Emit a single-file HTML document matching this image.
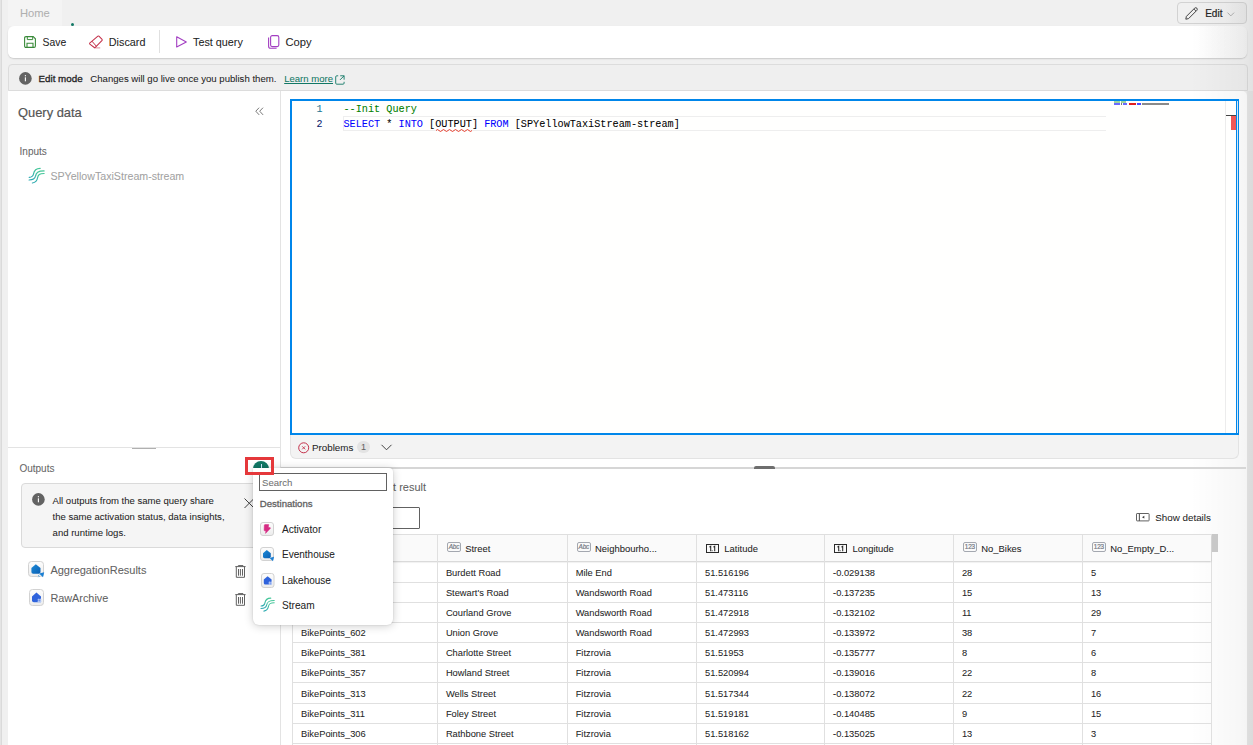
<!DOCTYPE html>
<html><head><meta charset="utf-8">
<style>
*{box-sizing:border-box;margin:0;padding:0}
html,body{width:1253px;height:745px;overflow:hidden;background:#f0f0f0;font-family:"Liberation Sans",sans-serif;color:#242424}
.a{position:absolute}
.t{position:absolute;white-space:nowrap;line-height:1;-webkit-text-stroke:0.05px currentColor}
svg{position:absolute;overflow:visible}
</style></head><body>
<div class="a" style="left:0px;top:0px;width:1px;height:745px;background:#e4e4e4"></div>
<div class="a" style="left:1px;top:0px;width:1px;height:745px;background:#dadada"></div>
<div class="a" style="left:8px;top:0px;width:54px;height:26px;background:#f4f4f4"></div>
<div class="t" style="left:20px;top:8.12px;font-size:11.2px;color:#b0b0b0;">Home</div>
<div class="a" style="left:70.8px;top:22.7px;width:3.5px;height:3.5px;border-radius:50%;background:#117865"></div>
<div class="a" style="left:1177px;top:2px;width:70px;height:22px;border:1px solid #d2d2d2;border-radius:4px;background:linear-gradient(90deg,#f0f0f0 70%,#e9e9e9)"></div>
<svg style="left:1185px;top:6.5px" width="14" height="13" viewBox="0 0 14 13"><path d="M0.8 12.2 L1.4 9.4 L9.6 1.2 Q10.8 0.2 11.9 1.2 Q12.8 2.3 11.8 3.4 L3.6 11.6 Z" fill="none" stroke="#424242" stroke-width="1"/><path d="M8.9 2 L11 4.1" stroke="#424242" stroke-width="0.9"/></svg>
<div class="t" style="left:1205.2px;top:8.54px;font-size:10px;color:#242424;-webkit-text-stroke:0.2px currentColor;">Edit</div>
<svg style="left:1227px;top:12px" width="8" height="5" viewBox="0 0 8 5"><path d="M0.5 0.6 L3.8 3.9 L7.1 0.6" fill="none" stroke="#a6a6a6" stroke-width="0.9"/></svg>
<div class="a" style="left:8px;top:26px;width:1239px;height:31.5px;background:linear-gradient(90deg,#fff 96%,#f3f3f3);border-radius:6px;box-shadow:0 1px 1.5px rgba(0,0,0,.16)"></div>
<svg style="left:24px;top:36px" width="12" height="12" viewBox="0 0 12 12"><path d="M2 0.6 H9.2 L11.4 2.8 V10 Q11.4 11.4 10 11.4 H2 Q0.6 11.4 0.6 10 V2 Q0.6 0.6 2 0.6 Z" fill="none" stroke="#3a8a3a" stroke-width="1.1"/><path d="M3.3 0.8 V3.6 H8.7 V0.8" fill="none" stroke="#3a8a3a" stroke-width="1"/><path d="M3 11.3 V7.2 H9 V11.3" fill="none" stroke="#3a8a3a" stroke-width="1.1"/></svg>
<div class="t" style="left:42.6px;top:37.50px;font-size:10.4px;color:#242424;">Save</div>
<svg style="left:88px;top:35px" width="16" height="14" viewBox="0 0 16 14"><path d="M1.7 8.1 L9.9 1.1 Q10.4 0.8 10.9 1.2 L14.1 4.4 Q14.4 4.9 14.1 5.4 L7.3 12.4 Q6.8 12.8 6.3 12.5 L1.8 9.1 Q1.4 8.6 1.7 8.1 Z" fill="none" stroke="#c4314b" stroke-width="1.05" stroke-linejoin="round"/><path d="M3.9 6.1 L8.3 11.2" stroke="#c4314b" stroke-width="1"/><path d="M6.4 12.9 H12.2" stroke="#c4314b" stroke-width="1" opacity=".55"/></svg>
<div class="t" style="left:108.8px;top:37.16px;font-size:10.8px;color:#242424;">Discard</div>
<div class="a" style="left:158.5px;top:30px;width:1px;height:23px;background:#e0e0e0"></div>
<svg style="left:176px;top:36px" width="12" height="12" viewBox="0 0 12 12"><path d="M0.7 0.8 L10.3 5.9 L0.7 11 Z" fill="none" stroke="#a33fc2" stroke-width="1.1" stroke-linejoin="round"/></svg>
<div class="t" style="left:193px;top:37.16px;font-size:10.8px;color:#242424;">Test query</div>
<svg style="left:267.5px;top:35px" width="12" height="14" viewBox="0 0 12 14"><rect x="2.6" y="0.6" width="8.2" height="11" rx="1.6" fill="none" stroke="#a33fc2" stroke-width="1.1"/><path d="M0.6 2.6 V11.2 Q0.6 13.3 2.7 13.3 H8.6" fill="none" stroke="#a33fc2" stroke-width="1.1"/></svg>
<div class="t" style="left:285.5px;top:36.82px;font-size:11.2px;color:#242424;">Copy</div>
<div class="a" style="left:8px;top:64px;width:1240px;height:27px;background:#efefef;border:1px solid #dcdcdc;border-radius:4px 4px 0 0"></div>
<svg style="left:19px;top:71.5px" width="13" height="13" viewBox="0 0 13 13"><circle cx="6.4" cy="6.4" r="6.3" fill="#636363"/><rect x="5.85" y="3.1" width="1.1" height="1.2" fill="#fff"/><rect x="5.85" y="5.3" width="1.1" height="4" fill="#fff"/></svg>
<div class="t" style="left:38.5px;top:73.50px;font-size:9.8px;color:#242424;-webkit-text-stroke:0.3px currentColor;">Edit mode</div>
<div class="t" style="left:90.3px;top:73.67px;font-size:9.6px;color:#242424;">Changes will go live once you publish them.</div>
<div class="t" style="left:284.2px;top:73.72px;font-size:9.55px;color:#117865;text-decoration:underline;text-underline-offset:0.8px">Learn more</div>
<svg style="left:335px;top:75px" width="10" height="10" viewBox="0 0 10 10"><path d="M3.2 0.8 H1.8 Q0.7 0.8 0.7 1.9 V8.2 Q0.7 9.2 1.8 9.2 H8 Q9.1 9.2 9.1 8.2 V6.8" fill="none" stroke="#117865" stroke-width="0.9"/><path d="M5.2 0.8 H9.1 V4.7 M9.1 0.8 L5 4.9" fill="none" stroke="#117865" stroke-width="0.9"/></svg>
<div class="a" style="left:8px;top:91px;width:272px;height:654px;background:#fff"></div>
<div class="a" style="left:280px;top:91px;width:1px;height:654px;background:#e3e3e3"></div>
<div class="t" style="left:18px;top:107.08px;font-size:12.9px;color:#555555;-webkit-text-stroke:0.2px currentColor;">Query data</div>
<svg style="left:254.5px;top:106.5px" width="10" height="9" viewBox="0 0 10 9"><path d="M4.1 0.7 L0.8 4.2 L4.2 7.9 M8 0.7 L4.7 4.2 L8.1 7.9" fill="none" stroke="#787878" stroke-width="1"/></svg>
<div class="t" style="left:19.6px;top:146.53px;font-size:10px;color:#666666;">Inputs</div>
<svg style="left:28px;top:167px" width="17" height="17" viewBox="0 0 17 17"><defs><linearGradient id="sg" x1="0" y1="0" x2="0.3" y2="1"><stop offset="0" stop-color="#4bd08f"/><stop offset="1" stop-color="#2aa7b4"/></linearGradient><linearGradient id="bx" x1="0" y1="0" x2="0" y2="1"><stop offset="0" stop-color="#fdfdfd"/><stop offset="1" stop-color="#ececec"/></linearGradient><linearGradient id="bl" x1="0" y1="0" x2="1" y2="1"><stop offset="0" stop-color="#1a8ad8"/><stop offset="1" stop-color="#0b5fb3"/></linearGradient></defs><g fill="none" stroke="url(#sg)" stroke-width="1.2" stroke-linecap="round"><path d="M1.2 10.3 C4.3 10.3 5 9.4 5.5 7 C6.1 3.3 7.8 1.3 12.2 1.3"/><path d="M1.1 13 C5 13 6.9 12 7.5 9.2 C8.1 5.6 9.8 3.9 16.1 3.9"/><path d="M4.4 16 C7.6 15.5 9 14 9.5 11 C10.1 7.6 11.4 6.5 16.1 6.5"/></g></svg>
<div class="t" style="left:50.4px;top:171.18px;font-size:10.65px;color:#a2a2a2;">SPYellowTaxiStream-stream</div>
<div class="a" style="left:8px;top:447px;width:272px;height:1px;background:#e3e3e3"></div>
<div class="a" style="left:132px;top:448px;width:24px;height:1.2px;background:#b0b0b0"></div>
<div class="t" style="left:19.4px;top:463.54px;font-size:10px;color:#666666;">Outputs</div>
<div class="a" style="left:20.5px;top:483px;width:250px;height:64.5px;background:#f5f5f5;border:1px solid #dadada;border-radius:4px"></div>
<svg style="left:31.5px;top:493px" width="13" height="13" viewBox="0 0 13 13"><circle cx="6.4" cy="6.4" r="6.3" fill="#636363"/><rect x="5.85" y="3.1" width="1.1" height="1.2" fill="#fff"/><rect x="5.85" y="5.3" width="1.1" height="4" fill="#fff"/></svg>
<div class="t" style="left:52.6px;top:496.02px;font-size:9.55px;color:#242424;">All outputs from the same query share</div>
<div class="t" style="left:52.6px;top:511.72px;font-size:9.55px;color:#242424;">the same activation status, data insights,</div>
<div class="t" style="left:52.6px;top:527.52px;font-size:9.55px;color:#242424;">and runtime logs.</div>
<svg style="left:244px;top:498px" width="11" height="11" viewBox="0 0 11 11"><path d="M0.5 0.5 L10 10 M10 0.5 L0.5 10" stroke="#424242" stroke-width="1"/></svg>
<svg style="left:27.8px;top:560.8px" width="17" height="17" viewBox="0 0 17 17"><rect x="0.5" y="0.5" width="15" height="15" rx="3" fill="url(#bx)" stroke="#d2d2d2"/><path d="M3.4 7 L7.8 3.2 L12.5 7 V11.5 L11 12.8 H5.2 Q3.4 12.8 3.4 11 Z" fill="url(#bl)"/><path d="M11.2 12.6 L16.2 11.2 L15 16.2 Z" fill="#1a7fd4"/><path d="M10.2 14.2 l1 1 M11.8 13.2 l1 1 M10.4 16.2 l1 -1" stroke="#3a9be0" stroke-width=".8"/></svg>
<div class="t" style="left:50.4px;top:564.69px;font-size:11px;color:#616161;">AggregationResults</div>
<svg style="left:29px;top:589px" width="16" height="17" viewBox="0 0 16 17"><rect x="0.5" y="0.5" width="14" height="16" rx="3" fill="url(#bx)" stroke="#d2d2d2"/><path d="M3 7.4 L7.4 3.6 L12 7.4 V13.2 H4.8 Q3 13.2 3 11.4 Z" fill="#2f63dc"/><path d="M8.5 10.8 H13 M8.5 12.4 H13 M9.8 9.6 V13.6 M11.6 9.6 V13.6" stroke="#cfdcfb" stroke-width=".7"/></svg>
<div class="t" style="left:50.4px;top:592.52px;font-size:10.85px;color:#616161;">RawArchive</div>
<svg style="left:235px;top:565px" width="11" height="13" viewBox="0 0 11 13"><path d="M0.3 1.6 H10.6 M3.3 1.3 V0.6 H8 V1.3 M1.3 1.8 V12.3 H9.5 V1.8 M3.5 4 V10.7 M5.4 4 V10.7 M7.5 4 V10.7" fill="none" stroke="#616161" stroke-width="1"/></svg>
<svg style="left:235px;top:593px" width="11" height="13" viewBox="0 0 11 13"><path d="M0.3 1.6 H10.6 M3.3 1.3 V0.6 H8 V1.3 M1.3 1.8 V12.3 H9.5 V1.8 M3.5 4 V10.7 M5.4 4 V10.7 M7.5 4 V10.7" fill="none" stroke="#616161" stroke-width="1"/></svg>
<div class="a" style="left:281px;top:91px;width:966px;height:654px;background:#fff;border-radius:0 5px 0 0"></div>
<div class="a" style="left:1247px;top:91px;width:6px;height:654px;background:#e8e8e8"></div>
<div class="a" style="left:1190px;top:0px;width:63px;height:745px;background:linear-gradient(90deg,rgba(0,0,0,0),rgba(0,0,0,.035) 85%,rgba(0,0,0,.06))"></div>
<div class="a" style="left:290px;top:99px;width:949px;height:360px;background:#f3f3f3;border:1px solid #e3e3e3;border-top:none;border-radius:0 0 6px 6px"></div>
<div class="a" style="left:290px;top:99px;width:949px;height:336px;background:#fffffe;border:2px solid #0086ea"></div>
<div class="a" style="left:343px;top:116px;width:763px;height:15px;border:1px solid #eeeeee;border-right:none"></div>
<div class="t" style="left:316.6px;top:104.53px;font-size:10px;color:#237893;font-family:'Liberation Mono',monospace;">1</div>
<div class="t" style="left:316.6px;top:119.53px;font-size:10px;color:#0b216f;font-family:'Liberation Mono',monospace;">2</div>
<div class="t" style="left:343.5px;top:105.37px;font-size:10.2px;color:#008000;font-family:'Liberation Mono',monospace;">--Init Query</div>
<div class="t" style="left:343.5px;top:120.37px;font-size:10.2px;color:#000;font-family:'Liberation Mono',monospace;"><span style="color:#0000ff">SELECT</span> * <span style="color:#0000ff">INTO</span> [OUTPUT] <span style="color:#0000ff">FROM</span> [SPYellowTaxiStream-stream]</div>
<svg style="left:436px;top:128px" width="40" height="4" viewBox="0 0 40 4"><path d="M0 2.5 q1.5 -2 3 0 t3 0 t3 0 t3 0 t3 0 t3 0 t3 0 t3 0 t3 0 t3 0 t3 0 t3 0" fill="none" stroke="#e51400" stroke-width="0.8"/></svg>
<div class="a" style="left:1114px;top:101px;width:6px;height:1.6px;background:#9fd69f"></div>
<div class="a" style="left:1121px;top:101px;width:5px;height:1.6px;background:#9fd69f"></div>
<div class="a" style="left:1114px;top:103px;width:6px;height:1.8px;background:#6a6aff"></div>
<div class="a" style="left:1121px;top:103px;width:1px;height:1.8px;background:#777"></div>
<div class="a" style="left:1123px;top:103px;width:4px;height:1.8px;background:#6a6aff"></div>
<div class="a" style="left:1129px;top:103px;width:7px;height:1.8px;background:#e21e1e"></div>
<div class="a" style="left:1137px;top:103px;width:4px;height:1.8px;background:#4a4aff"></div>
<div class="a" style="left:1142px;top:103px;width:27px;height:1.6px;background:#8a8a8a"></div>
<div class="a" style="left:1225px;top:101px;width:1px;height:332px;background:#ececec"></div>
<div class="a" style="left:1226px;top:115px;width:10px;height:1px;background:#444"></div>
<div class="a" style="left:1231px;top:116px;width:5px;height:14px;background:#f25757"></div>
<div class="a" style="left:1236px;top:101px;width:1px;height:332px;background:#0086ea"></div>
<div class="a" style="left:1237px;top:101px;width:1px;height:332px;background:#d8e8f5"></div>
<svg style="left:297.5px;top:441.5px" width="12" height="12" viewBox="0 0 12 12"><circle cx="5.7" cy="5.8" r="5" fill="none" stroke="#c4314b" stroke-width="1"/><path d="M4.2 4.3 L7.2 7.3 M7.2 4.3 L4.2 7.3" stroke="#c4314b" stroke-width="0.9"/></svg>
<div class="t" style="left:312px;top:442.70px;font-size:9.8px;color:#242424;">Problems</div>
<div class="a" style="left:357px;top:441px;width:13px;height:12px;border-radius:6px;background:#e3e3e3"></div>
<div class="t" style="left:361px;top:442.88px;font-size:9px;color:#616161;">1</div>
<svg style="left:380.5px;top:444px" width="11" height="7" viewBox="0 0 11 7"><path d="M0.5 0.8 L5.5 5.8 L10.5 0.8" fill="none" stroke="#424242" stroke-width="1"/></svg>
<div class="a" style="left:281px;top:467px;width:965px;height:2px;background:#d6d6d6"></div>
<div class="a" style="left:754px;top:466px;width:21px;height:3px;border-radius:2px 2px 0 0;background:#6e6e6e"></div>
<div class="t" style="right:827px;top:481.52px;font-size:10.96px;color:#616161">Test result</div>
<div class="a" style="left:300px;top:507px;width:120px;height:22px;border:1px solid #616161;border-radius:1px"></div>
<svg style="left:1136px;top:512.8px" width="14" height="9" viewBox="0 0 14 9"><rect x="0.5" y="0.5" width="12.6" height="7.4" rx=".6" fill="none" stroke="#5a5a5a" stroke-width=".95"/><path d="M3.4 0.5 V7.9" stroke="#5a5a5a" stroke-width="1.1"/><path d="M6 4.2 L8.3 2.8 V5.6 Z" fill="#3a3a3a"/></svg>
<div class="t" style="left:1155.3px;top:512.60px;font-size:9.8px;color:#242424;">Show details</div>
<div class="a" style="left:292px;top:534px;width:920px;height:211px;border:1px solid #e0e0e0;border-bottom:none"></div>
<div class="a" style="left:293px;top:535px;width:918px;height:26px;background:#fafafa;box-shadow:0 1px 1.5px rgba(0,0,0,.2)"></div>
<div class="a" style="left:437px;top:535px;width:1px;height:210px;background:#e0e0e0"></div>
<div class="a" style="left:567px;top:535px;width:1px;height:210px;background:#e0e0e0"></div>
<div class="a" style="left:696px;top:535px;width:1px;height:210px;background:#e0e0e0"></div>
<div class="a" style="left:824px;top:535px;width:1px;height:210px;background:#e0e0e0"></div>
<div class="a" style="left:953px;top:535px;width:1px;height:210px;background:#e0e0e0"></div>
<div class="a" style="left:1082px;top:535px;width:1px;height:210px;background:#e0e0e0"></div>
<div class="a" style="left:293px;top:582px;width:918px;height:1px;background:#e0e0e0"></div>
<div class="a" style="left:293px;top:602px;width:918px;height:1px;background:#e0e0e0"></div>
<div class="a" style="left:293px;top:622px;width:918px;height:1px;background:#e0e0e0"></div>
<div class="a" style="left:293px;top:642px;width:918px;height:1px;background:#e0e0e0"></div>
<div class="a" style="left:293px;top:662px;width:918px;height:1px;background:#e0e0e0"></div>
<div class="a" style="left:293px;top:682px;width:918px;height:1px;background:#e0e0e0"></div>
<div class="a" style="left:293px;top:703px;width:918px;height:1px;background:#e0e0e0"></div>
<div class="a" style="left:293px;top:723px;width:918px;height:1px;background:#e0e0e0"></div>
<div class="a" style="left:293px;top:743px;width:918px;height:1px;background:#e0e0e0"></div>
<div class="t" style="left:301.1px;top:568.83px;font-size:9.3px;color:#242424;">BikePoints_001</div>
<div class="t" style="left:445.9px;top:568.83px;font-size:9.3px;color:#242424;">Burdett Road</div>
<div class="t" style="left:575.7px;top:568.83px;font-size:9.3px;color:#242424;">Mile End</div>
<div class="t" style="left:705.0px;top:568.83px;font-size:9.3px;color:#242424;">51.516196</div>
<div class="t" style="left:833.1px;top:568.83px;font-size:9.3px;color:#242424;">-0.029138</div>
<div class="t" style="left:961.9px;top:568.83px;font-size:9.3px;color:#242424;">28</div>
<div class="t" style="left:1090.9px;top:568.83px;font-size:9.3px;color:#242424;">5</div>
<div class="t" style="left:301.1px;top:588.83px;font-size:9.3px;color:#242424;">BikePoints_002</div>
<div class="t" style="left:445.9px;top:588.83px;font-size:9.3px;color:#242424;">Stewart's Road</div>
<div class="t" style="left:575.7px;top:588.83px;font-size:9.3px;color:#242424;">Wandsworth Road</div>
<div class="t" style="left:705.0px;top:588.83px;font-size:9.3px;color:#242424;">51.473116</div>
<div class="t" style="left:833.1px;top:588.83px;font-size:9.3px;color:#242424;">-0.137235</div>
<div class="t" style="left:961.9px;top:588.83px;font-size:9.3px;color:#242424;">15</div>
<div class="t" style="left:1090.9px;top:588.83px;font-size:9.3px;color:#242424;">13</div>
<div class="t" style="left:301.1px;top:608.83px;font-size:9.3px;color:#242424;">BikePoints_003</div>
<div class="t" style="left:445.9px;top:608.83px;font-size:9.3px;color:#242424;">Courland Grove</div>
<div class="t" style="left:575.7px;top:608.83px;font-size:9.3px;color:#242424;">Wandsworth Road</div>
<div class="t" style="left:705.0px;top:608.83px;font-size:9.3px;color:#242424;">51.472918</div>
<div class="t" style="left:833.1px;top:608.83px;font-size:9.3px;color:#242424;">-0.132102</div>
<div class="t" style="left:961.9px;top:608.83px;font-size:9.3px;color:#242424;">11</div>
<div class="t" style="left:1090.9px;top:608.83px;font-size:9.3px;color:#242424;">29</div>
<div class="t" style="left:301.1px;top:628.83px;font-size:9.3px;color:#242424;">BikePoints_602</div>
<div class="t" style="left:445.9px;top:628.83px;font-size:9.3px;color:#242424;">Union Grove</div>
<div class="t" style="left:575.7px;top:628.83px;font-size:9.3px;color:#242424;">Wandsworth Road</div>
<div class="t" style="left:705.0px;top:628.83px;font-size:9.3px;color:#242424;">51.472993</div>
<div class="t" style="left:833.1px;top:628.83px;font-size:9.3px;color:#242424;">-0.133972</div>
<div class="t" style="left:961.9px;top:628.83px;font-size:9.3px;color:#242424;">38</div>
<div class="t" style="left:1090.9px;top:628.83px;font-size:9.3px;color:#242424;">7</div>
<div class="t" style="left:301.1px;top:648.83px;font-size:9.3px;color:#242424;">BikePoints_381</div>
<div class="t" style="left:445.9px;top:648.83px;font-size:9.3px;color:#242424;">Charlotte Street</div>
<div class="t" style="left:575.7px;top:648.83px;font-size:9.3px;color:#242424;">Fitzrovia</div>
<div class="t" style="left:705.0px;top:648.83px;font-size:9.3px;color:#242424;">51.51953</div>
<div class="t" style="left:833.1px;top:648.83px;font-size:9.3px;color:#242424;">-0.135777</div>
<div class="t" style="left:961.9px;top:648.83px;font-size:9.3px;color:#242424;">8</div>
<div class="t" style="left:1090.9px;top:648.83px;font-size:9.3px;color:#242424;">6</div>
<div class="t" style="left:301.1px;top:668.83px;font-size:9.3px;color:#242424;">BikePoints_357</div>
<div class="t" style="left:445.9px;top:668.83px;font-size:9.3px;color:#242424;">Howland Street</div>
<div class="t" style="left:575.7px;top:668.83px;font-size:9.3px;color:#242424;">Fitzrovia</div>
<div class="t" style="left:705.0px;top:668.83px;font-size:9.3px;color:#242424;">51.520994</div>
<div class="t" style="left:833.1px;top:668.83px;font-size:9.3px;color:#242424;">-0.139016</div>
<div class="t" style="left:961.9px;top:668.83px;font-size:9.3px;color:#242424;">22</div>
<div class="t" style="left:1090.9px;top:668.83px;font-size:9.3px;color:#242424;">8</div>
<div class="t" style="left:301.1px;top:689.83px;font-size:9.3px;color:#242424;">BikePoints_313</div>
<div class="t" style="left:445.9px;top:689.83px;font-size:9.3px;color:#242424;">Wells Street</div>
<div class="t" style="left:575.7px;top:689.83px;font-size:9.3px;color:#242424;">Fitzrovia</div>
<div class="t" style="left:705.0px;top:689.83px;font-size:9.3px;color:#242424;">51.517344</div>
<div class="t" style="left:833.1px;top:689.83px;font-size:9.3px;color:#242424;">-0.138072</div>
<div class="t" style="left:961.9px;top:689.83px;font-size:9.3px;color:#242424;">22</div>
<div class="t" style="left:1090.9px;top:689.83px;font-size:9.3px;color:#242424;">16</div>
<div class="t" style="left:301.1px;top:709.83px;font-size:9.3px;color:#242424;">BikePoints_311</div>
<div class="t" style="left:445.9px;top:709.83px;font-size:9.3px;color:#242424;">Foley Street</div>
<div class="t" style="left:575.7px;top:709.83px;font-size:9.3px;color:#242424;">Fitzrovia</div>
<div class="t" style="left:705.0px;top:709.83px;font-size:9.3px;color:#242424;">51.519181</div>
<div class="t" style="left:833.1px;top:709.83px;font-size:9.3px;color:#242424;">-0.140485</div>
<div class="t" style="left:961.9px;top:709.83px;font-size:9.3px;color:#242424;">9</div>
<div class="t" style="left:1090.9px;top:709.83px;font-size:9.3px;color:#242424;">15</div>
<div class="t" style="left:301.1px;top:729.83px;font-size:9.3px;color:#242424;">BikePoints_306</div>
<div class="t" style="left:445.9px;top:729.83px;font-size:9.3px;color:#242424;">Rathbone Street</div>
<div class="t" style="left:575.7px;top:729.83px;font-size:9.3px;color:#242424;">Fitzrovia</div>
<div class="t" style="left:705.0px;top:729.83px;font-size:9.3px;color:#242424;">51.518162</div>
<div class="t" style="left:833.1px;top:729.83px;font-size:9.3px;color:#242424;">-0.135025</div>
<div class="t" style="left:961.9px;top:729.83px;font-size:9.3px;color:#242424;">13</div>
<div class="t" style="left:1090.9px;top:729.83px;font-size:9.3px;color:#242424;">3</div>
<div class="t" style="left:465.2px;top:544.00px;font-size:9.45px;color:#242424;">Street</div>
<div class="a" style="left:447.0px;top:542px;width:14px;height:10px;border:1.3px solid #a4a8b0;border-radius:2px"></div>
<div class="t" style="left:448.8px;top:544.4px;font-size:6.4px;color:#767b86;font-style:italic;-webkit-text-stroke:0.2px #767b86;letter-spacing:-0.2px">Abc</div>
<div class="t" style="left:595.0px;top:544.00px;font-size:9.45px;color:#242424;">Neighbourho...</div>
<div class="a" style="left:576.8px;top:542px;width:14px;height:10px;border:1.3px solid #a4a8b0;border-radius:2px"></div>
<div class="t" style="left:578.6px;top:544.4px;font-size:6.4px;color:#767b86;font-style:italic;-webkit-text-stroke:0.2px #767b86;letter-spacing:-0.2px">Abc</div>
<div class="t" style="left:724.3px;top:544.00px;font-size:9.45px;color:#242424;">Latitude</div>
<svg style="left:705.9px;top:544px" width="13" height="9" viewBox="0 0 13 9"><rect x="0.5" y="0.5" width="12" height="8" fill="none" stroke="#2a2a2a" stroke-width="1"/><path d="M3.4 3.1 L4.7 2.2 V7.2 M7.4 3.1 L8.7 2.2 V7.2" fill="none" stroke="#2a2a2a" stroke-width="1.05"/><rect x="5.7" y="6.3" width="0.9" height="0.9" fill="#2a2a2a"/></svg>
<div class="t" style="left:852.4px;top:544.00px;font-size:9.45px;color:#242424;">Longitude</div>
<svg style="left:834.0px;top:544px" width="13" height="9" viewBox="0 0 13 9"><rect x="0.5" y="0.5" width="12" height="8" fill="none" stroke="#2a2a2a" stroke-width="1"/><path d="M3.4 3.1 L4.7 2.2 V7.2 M7.4 3.1 L8.7 2.2 V7.2" fill="none" stroke="#2a2a2a" stroke-width="1.05"/><rect x="5.7" y="6.3" width="0.9" height="0.9" fill="#2a2a2a"/></svg>
<div class="t" style="left:981.2px;top:544.00px;font-size:9.45px;color:#242424;">No_Bikes</div>
<div class="a" style="left:963.0px;top:542px;width:14px;height:10px;border:1.3px solid #a4a8b0;border-radius:2px"></div>
<div class="t" style="left:964.8px;top:544.4px;font-size:6.4px;color:#767b86;-webkit-text-stroke:0.2px #767b86;letter-spacing:-0.2px">123</div>
<div class="t" style="left:1110.2px;top:544.00px;font-size:9.45px;color:#242424;">No_Empty_D...</div>
<div class="a" style="left:1092.0px;top:542px;width:14px;height:10px;border:1.3px solid #a4a8b0;border-radius:2px"></div>
<div class="t" style="left:1093.8px;top:544.4px;font-size:6.4px;color:#767b86;-webkit-text-stroke:0.2px #767b86;letter-spacing:-0.2px">123</div>
<div class="a" style="left:1212px;top:534px;width:6px;height:18px;background:#c8c8c8"></div>
<div class="a" style="left:253px;top:461px;width:16px;height:16px;border-radius:50%;background:#117865"></div>
<div class="a" style="left:260.5px;top:464px;width:1px;height:6px;background:#cfe8ff"></div>
<div class="a" style="left:253px;top:468px;width:140px;height:157px;background:#fff;border-radius:0 4px 6px 6px;box-shadow:0 0 2px rgba(0,0,0,.14),0 1px 10px rgba(0,0,0,.2)"></div>
<div class="a" style="left:259px;top:473px;width:128px;height:18px;border:1px solid #616161"></div>
<div class="t" style="left:262px;top:477.77px;font-size:9.6px;color:#707070;">Search</div>
<div class="t" style="left:259.8px;top:498.77px;font-size:9.6px;color:#616161;-webkit-text-stroke:0.3px currentColor;">Destinations</div>
<div class="t" style="left:282px;top:524.65px;font-size:10.1px;color:#242424;">Activator</div>
<div class="t" style="left:282px;top:549.93px;font-size:10.0px;color:#242424;">Eventhouse</div>
<div class="t" style="left:282px;top:575.93px;font-size:10.0px;color:#242424;">Lakehouse</div>
<div class="t" style="left:282px;top:601.25px;font-size:10.1px;color:#242424;">Stream</div>
<svg style="left:260px;top:522px" width="14" height="14" viewBox="0 0 14 14"><rect x="0.5" y="0.5" width="13" height="13" rx="2.5" fill="url(#bx)" stroke="#d2d2d2"/><path d="M4.3 3 Q4.5 2.6 5 2.6 H8.8 L8.3 5.3 L10.4 5.8 Q10.5 6.1 10.3 6.4 L5.5 11.4 L5.9 9 L4.1 8.6 Z" fill="#d62c84" stroke="#d62c84" stroke-width=".5" stroke-linejoin="round"/></svg>
<svg style="left:260px;top:547px" width="15" height="15" viewBox="0 0 15 15"><rect x="0.5" y="0.5" width="13" height="13" rx="2.5" fill="url(#bx)" stroke="#d2d2d2"/><path d="M3 6.2 L6.8 2.9 L10.8 6.2 V10 L9.6 11.2 H4.6 Q3 11.2 3 9.6 Z" fill="url(#bl)"/><path d="M9.6 11 L14 9.8 L13 14.2 Z" fill="#1a7fd4"/></svg>
<svg style="left:260.5px;top:572.5px" width="14" height="15" viewBox="0 0 14 15"><rect x="0.5" y="0.5" width="12.5" height="14" rx="2.5" fill="url(#bx)" stroke="#d2d2d2"/><path d="M2.8 6.6 L6.6 3.3 L10.6 6.6 V11.6 H4.4 Q2.8 11.6 2.8 10 Z" fill="#2f63dc"/><path d="M7.5 9.4 H11.4 M7.5 10.8 H11.4 M8.6 8.4 V11.8 M10.2 8.4 V11.8" stroke="#cfdcfb" stroke-width=".6"/></svg>
<svg style="left:259.5px;top:597px" width="15" height="15" viewBox="0 0 17 17"><g fill="none" stroke="url(#sg)" stroke-width="1.2" stroke-linecap="round"><path d="M1.2 10.3 C4.3 10.3 5 9.4 5.5 7 C6.1 3.3 7.8 1.3 12.2 1.3"/><path d="M1.1 13 C5 13 6.9 12 7.5 9.2 C8.1 5.6 9.8 3.9 16.1 3.9"/><path d="M4.4 16 C7.6 15.5 9 14 9.5 11 C10.1 7.6 11.4 6.5 16.1 6.5"/></g></svg>
<div class="a" style="left:245px;top:457px;width:29px;height:18px;border:3px solid #e5383b"></div>
</body></html>
